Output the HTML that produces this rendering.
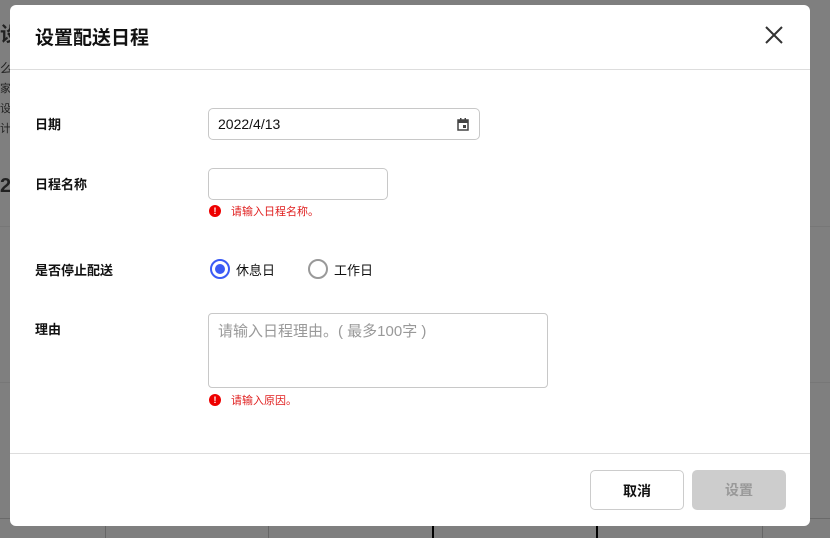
<!DOCTYPE html>
<html><head><meta charset="utf-8"><style>
*{box-sizing:border-box;margin:0;padding:0}
body{width:830px;height:538px;background:#7f7f7f;position:relative;overflow:hidden;font-family:"Liberation Sans","Noto Sans CJK SC",sans-serif;color:#111}
.bg{position:absolute;color:#222;font-size:13px}
.modal{position:absolute;left:10px;top:5px;width:800px;height:521px;background:#fff;border-radius:6px}
.t{position:absolute;left:25px;top:18px;font-size:19px;font-weight:bold}
.hl{position:absolute;left:0;right:0;top:64px;border-top:1px solid #ddd}
.fl{position:absolute;left:0;right:0;top:448px;border-top:1px solid #ddd}
.lab{position:absolute;left:25px;font-size:13px;font-weight:bold}
.inp{position:absolute;border:1px solid #c8c8c8;border-radius:5px;background:#fff}
.err{position:absolute;left:199px;font-size:11px;color:#e02020;display:flex;align-items:center}
.err i{display:inline-block;width:12px;height:12px;border-radius:50%;background:#e00;color:#fff;font-style:normal;font-size:9px;font-weight:bold;text-align:center;line-height:12px;margin-right:10px}
.btn{position:absolute;top:465px;width:94px;height:40px;border-radius:5px;font-size:14px;font-weight:bold;text-align:center;line-height:40px}
</style></head><body>
<div class="bg" style="left:0;top:18px;font-size:20px;font-weight:bold">设</div>
<div class="bg" style="left:0;top:58px">么</div>
<div class="bg" style="left:0;top:80px;font-size:11px">家</div>
<div class="bg" style="left:0;top:100px;font-size:11px">设</div>
<div class="bg" style="left:0;top:120px;font-size:11px">计</div>
<div class="bg" style="left:0;top:175px;font-size:20px;font-weight:bold">20</div>
<div style="position:absolute;left:0;right:0;top:226px;border-top:1px solid #777"></div>
<div style="position:absolute;left:0;right:0;top:382px;border-top:1px solid #777"></div>
<div style="position:absolute;left:0;right:0;top:518px;border-top:1px solid #6a6a6a"></div>
<div style="position:absolute;left:432px;top:526px;height:12px;border-left:2px solid #000"></div>
<div style="position:absolute;left:596px;top:526px;height:12px;border-left:2px solid #000"></div>
<div style="position:absolute;left:105px;top:526px;height:12px;border-left:1px solid #666"></div>
<div style="position:absolute;left:268px;top:526px;height:12px;border-left:1px solid #666"></div>
<div style="position:absolute;left:762px;top:526px;height:12px;border-left:1px solid #666"></div>
<div class="modal">
<div class="t">设置配送日程</div>
<svg style="position:absolute;left:755px;top:21px" width="18" height="18" viewBox="0 0 18 18"><path d="M1 1L17 17M17 1L1 17" stroke="#333" stroke-width="2"/></svg>
<div class="hl"></div>
<div class="lab" style="top:109px">日期</div>
<div class="inp" style="left:198px;top:103px;width:272px;height:32px;font-size:14px;padding:7px 9px">2022/4/13
<svg style="position:absolute;right:10px;top:9px" width="12" height="13" viewBox="0 0 12 13"><rect x="1" y="2" width="10" height="10" fill="none" stroke="#444" stroke-width="1.5"/><rect x="1" y="2" width="10" height="3" fill="#444"/><rect x="3" y="0" width="1.5" height="3" fill="#444"/><rect x="7.5" y="0" width="1.5" height="3" fill="#444"/><rect x="6" y="7" width="3" height="3" fill="#444"/></svg></div>
<div class="lab" style="top:169px">日程名称</div>
<div class="inp" style="left:198px;top:163px;width:180px;height:32px"></div>
<div class="err" style="top:198px"><i>!</i>请输入日程名称。</div>
<div class="lab" style="top:255px">是否停止配送</div>
<div style="position:absolute;left:200px;top:254px;width:20px;height:20px;border:2px solid #3b5bf5;border-radius:50%"><div style="position:absolute;left:3px;top:3px;width:10px;height:10px;border-radius:50%;background:#3b5bf5"></div></div>
<div style="position:absolute;left:226px;top:255px;font-size:13px">休息日</div>
<div style="position:absolute;left:298px;top:254px;width:20px;height:20px;border:2px solid #999;border-radius:50%"></div>
<div style="position:absolute;left:324px;top:255px;font-size:13px">工作日</div>
<div class="lab" style="top:314px">理由</div>
<div class="inp" style="left:198px;top:308px;width:340px;height:75px;border-radius:4px;font-size:15px;color:#999;padding:6px 9px">请输入日程理由。( 最多100字 )</div>
<div class="err" style="top:387px"><i>!</i>请输入原因。</div>
<div class="fl"></div>
<div class="btn" style="left:580px;border:1px solid #ccc;color:#111">取消</div>
<div class="btn" style="left:682px;background:#cdcdcd;color:#999">设置</div>
</div>
</body></html>
